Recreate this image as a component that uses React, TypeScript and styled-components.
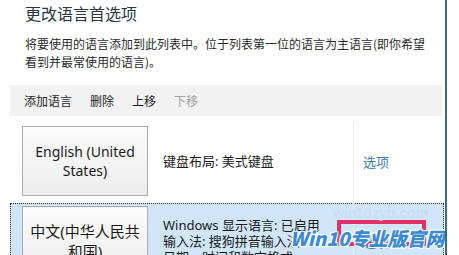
import React from 'react';
import styled, { createGlobalStyle } from 'styled-components';

const GlobalStyle = createGlobalStyle`
    html, body {
        margin: 0;
        padding: 0;
        background: #ffffff;
    }
    body {
        font-family: 'Noto Sans', 'Noto Sans CJK SC', sans-serif;
        color: #1f1f1f;
    }
`;

const Window = styled.div`
    position: relative;
    width: 445px;
    height: 255px;
    border-right: 2px solid #3b6a86;
    overflow: hidden;
    background: #ffffff;
`;

const Header = styled.div`
    padding: 2px 0 0 25px;
`;

const Title = styled.h1`
    margin: 0;
    font-family: 'Noto Sans CJK SC', sans-serif;
    font-size: 16px;
    font-weight: 400;
    line-height: 22px;
    color: #263646;
`;

const Desc = styled.p`
    margin: 11px 0 0 0;
    width: 410px;
    font-family: 'Noto Sans CJK SC', sans-serif;
    font-size: 12px;
    line-height: 18px;
    color: #2a2a2a;
`;

const Toolbar = styled.div`
    display: flex;
    align-items: center;
    gap: 18px;
    margin: 14px 0 0 10px;
    width: 418px;
    height: 31px;
    padding-left: 14px;
    background: #f2f2f2;
`;

const ToolButton = styled.span<{ $disabled?: boolean }>`
    font-family: 'Noto Sans CJK SC', sans-serif;
    font-size: 12px;
    color: ${p => (p.$disabled ? '#a0a0a0' : '#1f1f1f')};
`;

const List = styled.div`
    display: flex;
    flex-direction: column;
    gap: 4px;
    padding: 7px 1px 0 10px;
`;

const Row = styled.div<{ $selected?: boolean }>`
    display: grid;
    grid-template-columns: 126px 175px 1fr;
    column-gap: 15px;
    padding: 2px 0 2px 11px;
    border: 1px ${p => (p.$selected ? 'dotted #2a2a2a' : 'solid transparent')};
    background: ${p => (p.$selected ? '#d0e5f7' : 'transparent')};
`;

const LangBox = styled.div`
    height: 70px;
    box-sizing: border-box;
    display: flex;
    align-items: center;
    justify-content: center;
    text-align: center;
    border: 1px solid #acacac;
    background: linear-gradient(#fbfbfb, #ededed);
`;

const LangName = styled.span<{ $cjk?: boolean }>`
    font-size: ${p => (p.$cjk ? '15px' : '14px')};
    line-height: ${p => (p.$cjk ? '20px' : '19px')};
    color: #1a1a1a;
`;

const Info = styled.div`
    display: flex;
    flex-direction: column;
    justify-content: center;
    font-size: 13px;
    line-height: 16px;
    color: #1a1a1a;
    white-space: nowrap;
`;

const OptionCell = styled.div`
    position: relative;
    display: flex;
    align-items: center;
    margin-top: -3px;
    margin-bottom: -3px;
    padding-left: 9px;
    border-left: 1px solid #ececec;
`;

const OptionLink = styled.a`
    font-family: 'Noto Sans CJK SC', sans-serif;
    font-size: 13px;
    color: #3a7db6;
    text-decoration: none;
`;

// tutorial highlight drawn over the "选项" link
const Highlight = styled.div`
    position: absolute;
    left: -17px;
    top: 17px;
    width: 89px;
    height: 26px;
    box-sizing: border-box;
    border: 4px solid #e3306b;
`;

const Watermark = styled.div`
    position: absolute;
    left: 290px;
    top: 226px;
    font-family: 'Noto Sans CJK SC', sans-serif;
    font-size: 19px;
    font-weight: 900;
    font-style: italic;
    line-height: 24px;
    color: #3a8ad6;
    white-space: nowrap;
    text-shadow: 1px 1px 0 #fff, -1px -1px 0 #fff, 1px -1px 0 #fff, -1px 1px 0 #fff;
`;

const WatermarkUrl = styled.div`
    position: absolute;
    left: 333px;
    top: 205px;
    font-family: 'Liberation Sans', sans-serif;
    font-size: 14px;
    font-weight: 700;
    color: #c4e0f3;
    white-space: nowrap;
`;

const App = () => (
    <>
        <GlobalStyle />
        <Window>
            <Header>
                <Title>更改语言首选项</Title>
                <Desc>将要使用的语言添加到此列表中。位于列表第一位的语言为主语言(即你希望看到并最常使用的语言)。</Desc>
            </Header>
            <Toolbar>
                <ToolButton>添加语言</ToolButton>
                <ToolButton>删除</ToolButton>
                <ToolButton>上移</ToolButton>
                <ToolButton $disabled>下移</ToolButton>
            </Toolbar>
            <List>
                <Row>
                    <LangBox>
                        <LangName>English (United<br />States)</LangName>
                    </LangBox>
                    <Info>
                        <span>键盘布局: 美式键盘</span>
                    </Info>
                    <OptionCell>
                        <OptionLink href="#">选项</OptionLink>
                    </OptionCell>
                </Row>
                <Row $selected>
                    <LangBox>
                        <LangName $cjk>中文(中华人民共<br />和国)</LangName>
                    </LangBox>
                    <Info>
                        <span>Windows 显示语言: 已启用</span>
                        <span>输入法: 搜狗拼音输入法</span>
                        <span>日期、时间和数字格式</span>
                    </Info>
                    <OptionCell>
                        <OptionLink href="#">选项</OptionLink>
                        <Highlight />
                    </OptionCell>
                </Row>
            </List>
            <WatermarkUrl>win10zyb.com</WatermarkUrl>
            <Watermark>Win10专业版官网</Watermark>
        </Window>
    </>
);

export default App;
